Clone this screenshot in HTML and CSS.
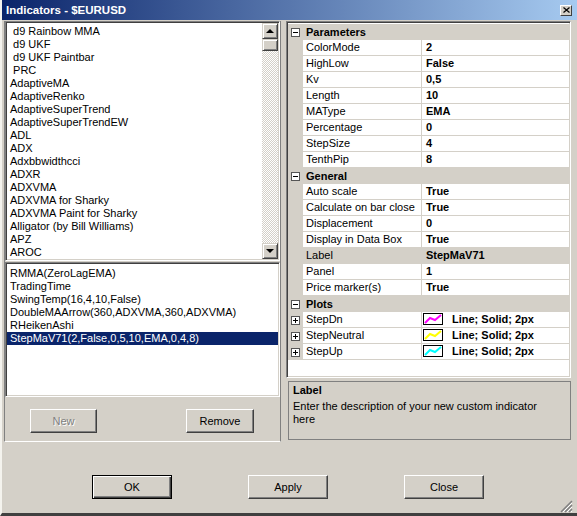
FILE: index.html
```html
<!DOCTYPE html>
<html lang="en">
<head>
  <meta charset="UTF-8">
  <title>Indicators - $EURUSD</title>
  <link rel="stylesheet" href="styles.css">
</head>
<body>

<div class="window">
  <div class="titlebar">
    <span class="title">Indicators - $EURUSD</span>
    <span class="x-btn">
      <svg width="7" height="6" viewBox="0 0 7 6"><path d="M0.5 0.5l6 5M6.5 0.5l-6 5" stroke="#000" stroke-width="1.2"/></svg>
    </span>
  </div>

  <div class="main">
    <!-- indicator lists -->
    <div class="left">
      <div class="list list-top">
        <div class="items">
          <div class="item"> d9 Rainbow MMA</div>
          <div class="item"> d9 UKF</div>
          <div class="item"> d9 UKF Paintbar</div>
          <div class="item"> PRC</div>
          <div class="item">AdaptiveMA</div>
          <div class="item">AdaptiveRenko</div>
          <div class="item">AdaptiveSuperTrend</div>
          <div class="item">AdaptiveSuperTrendEW</div>
          <div class="item">ADL</div>
          <div class="item">ADX</div>
          <div class="item">Adxbbwidthcci</div>
          <div class="item">ADXR</div>
          <div class="item">ADXVMA</div>
          <div class="item">ADXVMA for Sharky</div>
          <div class="item">ADXVMA Paint for Sharky</div>
          <div class="item">Alligator (by Bill Williams)</div>
          <div class="item">APZ</div>
          <div class="item">AROC</div>
        </div>
        <div class="vscroll">
          <div class="sb-btn"><span class="arrow-up"></span></div>
          <div class="sb-thumb"></div>
          <div class="sb-track"></div>
          <div class="sb-btn"><span class="arrow-down"></span></div>
        </div>
      </div>

      <div class="list list-added">
        <div class="items">
          <div class="item">RMMA(ZeroLagEMA)</div>
          <div class="item">TradingTime</div>
          <div class="item">SwingTemp(16,4,10,False)</div>
          <div class="item">DoubleMAArrow(360,ADXVMA,360,ADXVMA)</div>
          <div class="item">RHeikenAshi</div>
          <div class="item selected">StepMaV71(2,False,0,5,10,EMA,0,4,8)</div>
        </div>
      </div>

      <div class="left-buttons">
        <button class="btn btn-new" disabled>New</button>
        <button class="btn btn-remove">Remove</button>
      </div>
    </div>

    <!-- property grid -->
    <div class="right">
      <div class="grid">
        <div class="row cat">
          <div class="gut"><svg class="tbox" width="9" height="9"><rect x="0.5" y="0.5" width="8" height="8" fill="#fff" stroke="#555"/><path d="M2 4.5h5" stroke="#000"/></svg></div>
          <div class="cat-name">Parameters</div>
        </div>
        <div class="row"><div class="gut"></div><div class="name">ColorMode</div><div class="val">2</div></div>
        <div class="row"><div class="gut"></div><div class="name">HighLow</div><div class="val">False</div></div>
        <div class="row"><div class="gut"></div><div class="name">Kv</div><div class="val">0,5</div></div>
        <div class="row"><div class="gut"></div><div class="name">Length</div><div class="val">10</div></div>
        <div class="row"><div class="gut"></div><div class="name">MAType</div><div class="val">EMA</div></div>
        <div class="row"><div class="gut"></div><div class="name">Percentage</div><div class="val">0</div></div>
        <div class="row"><div class="gut"></div><div class="name">StepSize</div><div class="val">4</div></div>
        <div class="row"><div class="gut"></div><div class="name">TenthPip</div><div class="val">8</div></div>

        <div class="row cat">
          <div class="gut"><svg class="tbox" width="9" height="9"><rect x="0.5" y="0.5" width="8" height="8" fill="#fff" stroke="#555"/><path d="M2 4.5h5" stroke="#000"/></svg></div>
          <div class="cat-name">General</div>
        </div>
        <div class="row"><div class="gut"></div><div class="name">Auto scale</div><div class="val">True</div></div>
        <div class="row"><div class="gut"></div><div class="name">Calculate on bar close</div><div class="val">True</div></div>
        <div class="row"><div class="gut"></div><div class="name">Displacement</div><div class="val">0</div></div>
        <div class="row"><div class="gut"></div><div class="name">Display in Data Box</div><div class="val">True</div></div>
        <div class="row sel"><div class="gut"></div><div class="name">Label</div><div class="val">StepMaV71</div></div>
        <div class="row"><div class="gut"></div><div class="name">Panel</div><div class="val">1</div></div>
        <div class="row"><div class="gut"></div><div class="name">Price marker(s)</div><div class="val">True</div></div>

        <div class="row cat">
          <div class="gut"><svg class="tbox" width="9" height="9"><rect x="0.5" y="0.5" width="8" height="8" fill="#fff" stroke="#555"/><path d="M2 4.5h5" stroke="#000"/></svg></div>
          <div class="cat-name">Plots</div>
        </div>
        <div class="row">
          <div class="gut"><svg class="tbox" width="9" height="9"><rect x="0.5" y="0.5" width="8" height="8" fill="#fff" stroke="#555"/><path d="M2 4.5h5M4.5 2v5" stroke="#000"/></svg></div>
          <div class="name">StepDn</div>
          <div class="val plot">
            <span class="swatch"><svg width="18" height="10" viewBox="0 0 18 10"><polyline points="1,9 6,4 11,6 17,1" fill="none" stroke="#ff00ff" stroke-width="2"/></svg></span>
            <span>Line; Solid; 2px</span>
          </div>
        </div>
        <div class="row">
          <div class="gut"><svg class="tbox" width="9" height="9"><rect x="0.5" y="0.5" width="8" height="8" fill="#fff" stroke="#555"/><path d="M2 4.5h5M4.5 2v5" stroke="#000"/></svg></div>
          <div class="name">StepNeutral</div>
          <div class="val plot">
            <span class="swatch"><svg width="18" height="10" viewBox="0 0 18 10"><polyline points="1,9 6,4 11,6 17,1" fill="none" stroke="#ffff00" stroke-width="2"/></svg></span>
            <span>Line; Solid; 2px</span>
          </div>
        </div>
        <div class="row">
          <div class="gut"><svg class="tbox" width="9" height="9"><rect x="0.5" y="0.5" width="8" height="8" fill="#fff" stroke="#555"/><path d="M2 4.5h5M4.5 2v5" stroke="#000"/></svg></div>
          <div class="name">StepUp</div>
          <div class="val plot">
            <span class="swatch"><svg width="18" height="10" viewBox="0 0 18 10"><polyline points="1,9 6,4 11,6 17,1" fill="none" stroke="#00ffff" stroke-width="2"/></svg></span>
            <span>Line; Solid; 2px</span>
          </div>
        </div>
      </div>

      <div class="desc">
        <div class="desc-title">Label</div>
        <div class="desc-text">Enter the description of your new custom indicator<br>here</div>
      </div>
    </div>
  </div>

  <div class="footer">
    <button class="btn btn-wide btn-default">OK</button>
    <button class="btn btn-wide">Apply</button>
    <button class="btn btn-wide">Close</button>
    <svg class="grip" width="13" height="13" viewBox="0 0 13 13">
      <path d="M12 1L1 12M12 5L5 12M12 9L9 12" stroke="#808080" stroke-width="1.5"/>
      <path d="M12 3L3 12M12 7L7 12M12 11L11 12" stroke="#fff" stroke-width="1"/>
    </svg>
  </div>
</div>

</body>
</html>
```

FILE: styles.css
```css
* { box-sizing: border-box; }

body {
  margin: 0;
  background: #d4d0c8;
  font-family: "Liberation Sans", Arial, sans-serif;
  font-size: 11px;
  color: #000;
}

.window {
  width: 577px;
  height: 516px;
  border-left: 2px solid #f4f3ee;
  border-bottom: 3px solid #404040;
  display: flex;
  flex-direction: column;
  overflow: hidden;
}

/* title bar */
.titlebar {
  height: 20px;
  flex: none;
  display: flex;
  align-items: center;
  justify-content: space-between;
  padding: 0 5px 0 4px;
  background: linear-gradient(to right, #0a246a, #a6caf0);
}

.title {
  color: #fff;
  font-weight: bold;
  font-size: 11.5px;
}

.x-btn {
  width: 12px;
  height: 11px;
  display: flex;
  align-items: center;
  justify-content: center;
  background: #d4d0c8;
  border: 1px solid;
  border-color: #fff #404040 #404040 #fff;
}

/* main area */
.main {
  height: 421px;
  flex: none;
  margin-top: 1px;
  padding-left: 2px;
  display: flex;
  gap: 5px;
}

.left {
  width: 277px;
  display: flex;
  flex-direction: column;
  border-left: 1px solid #808080;
  border-right: 1px solid #808080;
  border-bottom: 1px solid #fff;
}

.list {
  background: #fff;
  border: 1px solid;
  border-color: #808080 #fff #fff #808080;
  box-shadow: inset 1px 1px #404040, inset -1px -1px #d4d0c8;
  padding: 1px;
  display: flex;
  overflow: hidden;
}

.list-top { height: 240px; }

.list-added {
  height: 135px;
  margin-top: 1px;
}

.items {
  flex: 1;
  padding-top: 2px;
  overflow: hidden;
}

.list-added .items { padding-top: 3px; }

.item {
  height: 13px;
  line-height: 13px;
  padding-left: 3px;
  white-space: pre;
}

.item.selected {
  background: #0a246a;
  color: #fff;
}

/* scrollbar */
.vscroll {
  width: 16px;
  flex: none;
  display: flex;
  flex-direction: column;
}

.sb-btn, .sb-thumb {
  background: #d4d0c8;
  border: 1px solid;
  border-color: #d4d0c8 #404040 #404040 #d4d0c8;
  box-shadow: inset 1px 1px #fff, inset -1px -1px #808080;
}

.sb-btn {
  height: 16px;
  display: flex;
  align-items: center;
  justify-content: center;
}

.sb-thumb { height: 12px; }

.sb-track {
  flex: 1;
  background-image: repeating-conic-gradient(#fff 0 25%, #d4d0c8 0 50%);
  background-size: 2px 2px;
}

.arrow-up {
  border-left: 4px solid transparent;
  border-right: 4px solid transparent;
  border-bottom: 4px solid #000;
  margin-top: -1px;
}

.arrow-down {
  border-left: 4px solid transparent;
  border-right: 4px solid transparent;
  border-top: 4px solid #000;
}

/* buttons */
.btn {
  font-family: "Liberation Sans", Arial, sans-serif;
  font-size: 11px;
  color: #000;
  height: 24px;
  padding: 0;
  background: #d4d0c8;
  border: 1px solid;
  border-color: #fff #404040 #404040 #fff;
  box-shadow: inset -1px -1px #808080;
}

.btn:disabled {
  color: #808080;
  text-shadow: 1px 1px #fff;
}

.left-buttons {
  flex: 1;
  display: flex;
  align-items: flex-start;
  gap: 89px;
  padding: 12px 0 0 25px;
}

.btn-new { width: 67px; }
.btn-remove { width: 68px; }

/* property grid */
.right {
  width: 285px;
  display: flex;
  flex-direction: column;
}

.grid {
  height: 357px;
  background: #fff;
  border: 1px solid;
  border-color: #808080 #fff #fff #808080;
  box-shadow: inset 1px 1px #404040, inset -1px -1px #d4d0c8;
  padding: 2px 1px 1px 1px;
  overflow: hidden;
}

.row {
  height: 16px;
  display: flex;
}

.gut {
  width: 15px;
  flex: none;
  background: #d4d0c8;
  padding: 4px 0 0 3px;
}

.tbox { display: block; }

.name {
  width: 119px;
  flex: none;
  padding-left: 3px;
  line-height: 15px;
  white-space: nowrap;
  overflow: hidden;
  border-right: 1px solid #d4d0c8;
  border-bottom: 1px solid #d4d0c8;
}

.val {
  flex: 1;
  padding-left: 4px;
  line-height: 15px;
  font-weight: bold;
  border-bottom: 1px solid #d4d0c8;
  white-space: nowrap;
}

.row.cat { background: #d4d0c8; }

.cat-name {
  font-weight: bold;
  line-height: 16px;
  padding-left: 3px;
}

.row.sel .name,
.row.sel .val { background: #d4d0c8; }

.val.plot {
  padding-left: 1px;
  display: flex;
  align-items: flex-start;
  gap: 9px;
}

.swatch {
  width: 20px;
  height: 12px;
  margin-top: 1px;
  border: 1px solid #000;
  background: #fff;
  display: flex;
  align-items: center;
  justify-content: center;
}

.swatch svg { display: block; }

/* description */
.desc {
  height: 59px;
  margin: 3px 0 0 2px;
  border: 1px solid #808080;
  padding: 2px 4px;
}

.desc-title {
  font-weight: bold;
  line-height: 13px;
  margin-bottom: 3px;
}

.desc-text { line-height: 13px; }

/* footer */
.footer {
  flex: 1;
  display: flex;
  align-items: flex-start;
  gap: 76px;
  padding: 33px 0 0 90px;
}

.btn-wide { width: 80px; }

.btn-default {
  border-color: #000;
  box-shadow: inset 1px 1px #fff, inset -1px -1px #404040, inset -2px -2px #808080;
}

.grip {
  align-self: flex-end;
  margin-left: auto;
  margin-right: 4px;
}
```
